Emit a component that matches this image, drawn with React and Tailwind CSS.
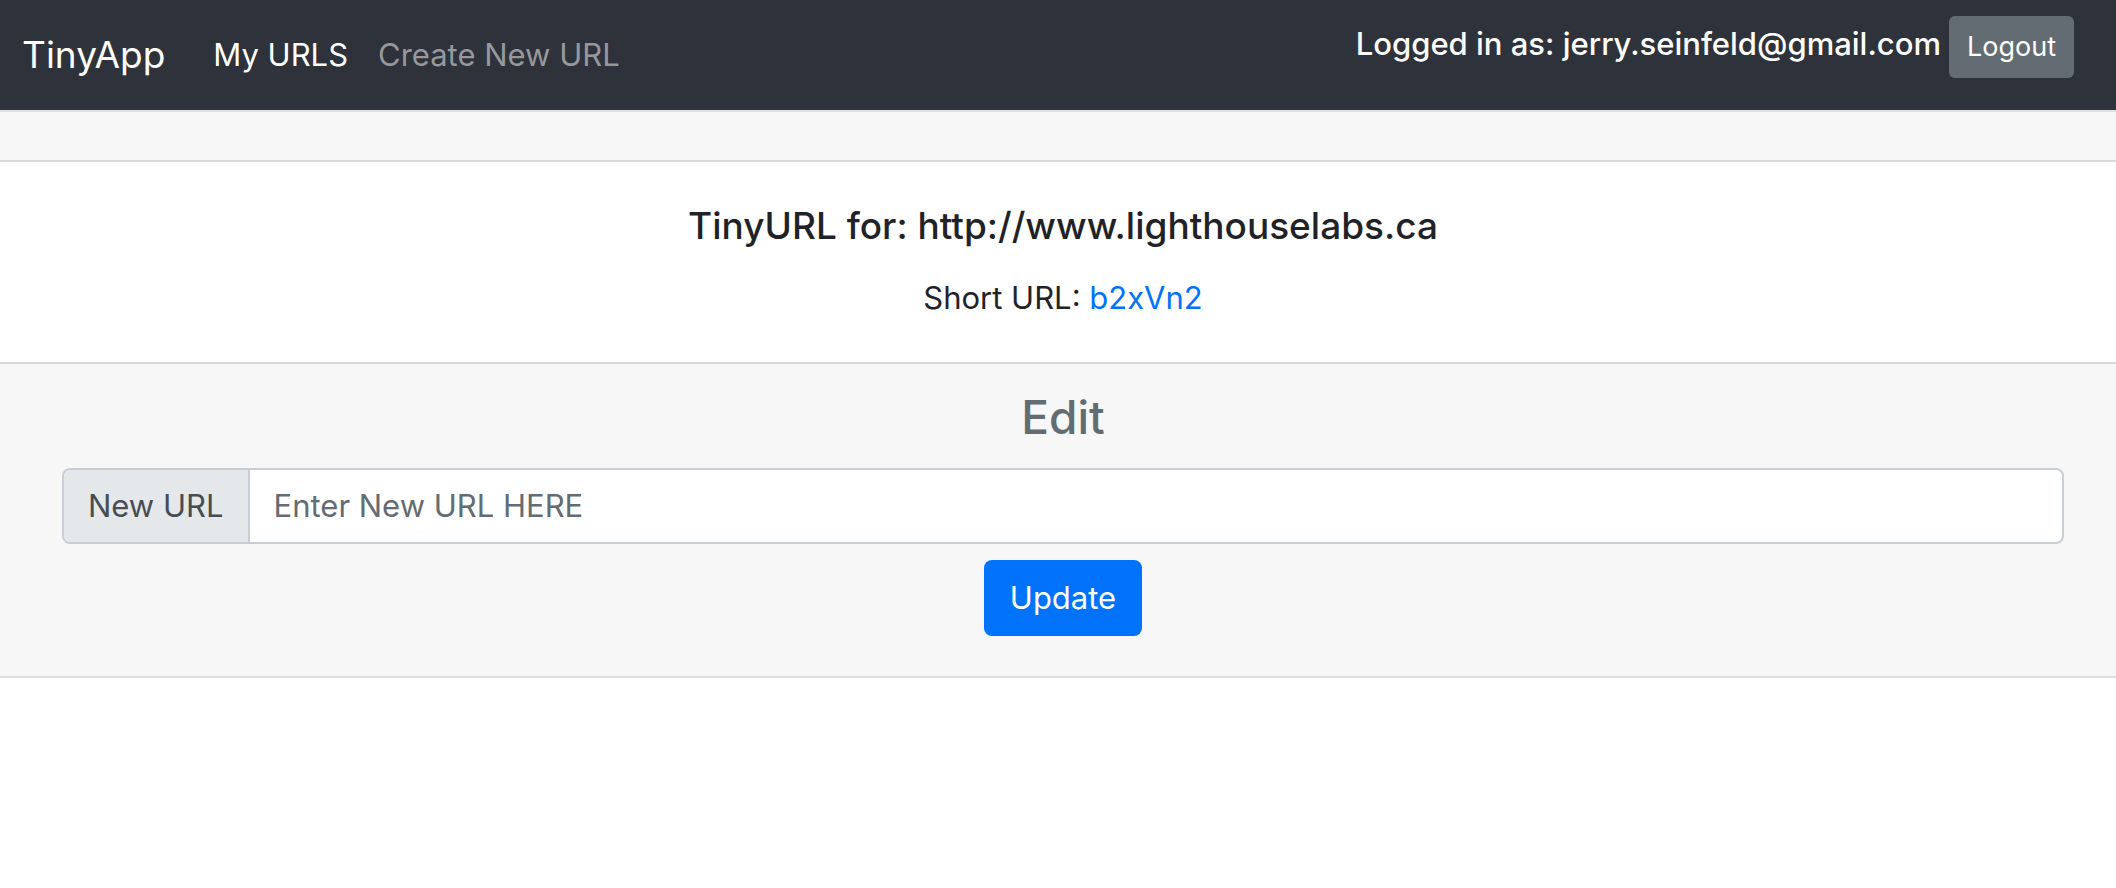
export default function App() {
  return (
    <div className="min-h-screen bg-white font-['Inter',sans-serif] text-[31px] leading-[48px] text-[#1f2327]">
      <nav className="flex items-start justify-between bg-[#2e323a] pt-4 pr-[42px] pb-5 pl-[22px]">
        <div className="flex items-center pt-1">
          <a href="#" className="mr-12 py-2 text-[37px] leading-[54px] text-white">TinyApp</a>
          <ul className="flex gap-[30px]">
            <li><a href="#urls" className="text-white">My URLS</a></li>
            <li><a href="#new" className="text-[#96989c]">Create New URL</a></li>
          </ul>
        </div>
        <form className="flex items-start gap-2" onSubmit={(e) => e.preventDefault()}>
          <span className="py-1 font-medium text-white">Logged in as: jerry.seinfeld@gmail.com</span>
          <button type="submit" className="rounded-md bg-[#626c72] px-[18px] py-[10px] text-[27px] leading-[42px] text-white">Logout</button>
        </form>
      </nav>

      <main className="border-y-2 border-[#dfdfdf] text-center">
        <div className="h-[50px] border-b-2 border-[#d9d9d9] bg-[#f7f7f7]" />
        <section className="pt-10 pr-[52px] pb-8 pl-[62px]">
          <h1 className="mb-6 text-[37px] leading-[48px] font-medium">TinyURL for: http://www.lighthouselabs.ca</h1>
          <p className="mb-2">
            Short URL: <a href="#b2xVn2" className="text-[#0173fb]">b2xVn2</a>
          </p>
        </section>
        <section className="border-t-2 border-[#d9d9d9] bg-[#f7f7f7] pt-6 pr-[52px] pb-10 pl-[62px]">
          <h2 className="mb-[22px] text-[46px] leading-[58px] font-medium text-[#626c72]">Edit</h2>
          <form onSubmit={(e) => e.preventDefault()}>
            <div className="mb-4 flex h-[76px] rounded-lg border-2 border-[#c8ced3] bg-white">
              <label htmlFor="new-url" className="flex items-center rounded-l-md border-r-2 border-[#c8ced3] bg-[#e4e8eb] px-6 text-[#474d52]">New URL</label>
              <input id="new-url" type="text" placeholder="Enter New URL HERE" className="min-w-0 flex-1 rounded-r-md px-6 placeholder:text-[#626c72]" />
            </div>
            <button type="submit" className="h-[76px] rounded-lg bg-[#0173fb] px-[26px] text-white">Update</button>
          </form>
        </section>
      </main>
    </div>
  );
}
